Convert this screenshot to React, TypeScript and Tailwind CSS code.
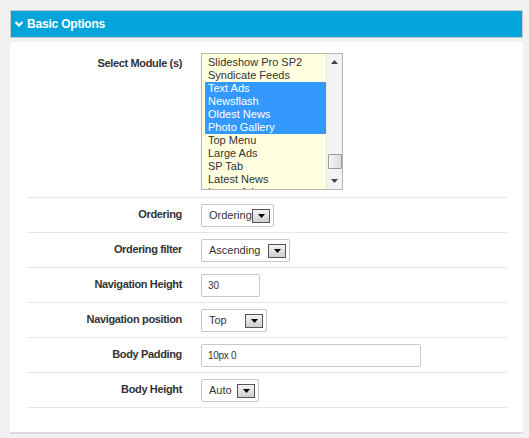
import React from "react";

const modules = [
  { name: "Slideshow Pro SP2", selected: false },
  { name: "Syndicate Feeds", selected: false },
  { name: "Text Ads", selected: true },
  { name: "Newsflash", selected: true },
  { name: "Oldest News", selected: true },
  { name: "Photo Gallery", selected: true },
  { name: "Top Menu", selected: false },
  { name: "Large Ads", selected: false },
  { name: "SP Tab", selected: false },
  { name: "Latest News", selected: false },
  { name: "Lower Ads", selected: false },
];

function DropArrow() {
  return (
    <span className="flex h-[14px] w-[18px] items-center justify-center border border-[#555] bg-gradient-to-b from-[#f4f4f4] to-[#cfcfcf]">
      <svg width="7" height="4" viewBox="0 0 7 4">
        <path d="M0 0h7L3.5 4z" fill="#000" />
      </svg>
    </span>
  );
}

function FakeSelect({ value, width }: { value: string; width: string }) {
  return (
    <div
      className={`flex h-[23px] items-center justify-between rounded-[2px] border border-[#c8c8c8] bg-white pl-[7px] pr-[3px] ${width}`}
    >
      <span className="text-[11px] text-[#333]">{value}</span>
      <DropArrow />
    </div>
  );
}

function Row({
  label,
  children,
  top,
}: {
  label: string;
  children: React.ReactNode;
  top?: boolean;
}) {
  return (
    <div
      className={`flex border-b border-[#e6e6e6] ${
        top ? "items-start pb-[7px] pt-[11px]" : "items-center pb-[5px] pt-[6px]"
      }`}
    >
      <div
        className={`w-[155px] shrink-0 text-right text-[11px] font-bold tracking-[-0.35px] text-[#333] ${
          top ? "pt-[2px]" : "pb-[3px]"
        }`}
      >
        {label}
      </div>
      <div className="ml-[19px]">{children}</div>
    </div>
  );
}

export default function App() {
  return (
    <div
      className="h-[438px] w-[529px] bg-[#f1f1f1] pl-[10px] pr-[6px] pt-[10px]"
      style={{ fontFamily: '"Liberation Sans", Arial, sans-serif' }}
    >
      <div className="flex h-[28px] items-center gap-[3px] border border-[#c9c9c9] bg-[#03a4da] pl-[3px] text-[12px] font-bold tracking-[-0.2px] text-white">
        <svg width="10" height="8" viewBox="0 0 10 8">
          <path
            d="M1.5 2l3.5 3.5L8.5 2"
            stroke="#fff"
            strokeWidth="2.2"
            fill="none"
          />
        </svg>
        Basic Options
      </div>

      <div className="mt-[4px] h-[392px] border-b-[2px] border-[#dcdcdc] bg-white pl-[17px] pr-[16px]">
        <Row label="Select Module (s)" top>
          <div className="flex h-[137px] w-[142px] border border-[#b5b5b5] bg-[#ffffdf]">
            <div className="flex-1 overflow-hidden pl-[3px] pt-[2px]">
              {modules.map((m) => (
                <div
                  key={m.name}
                  className={`h-[13px] pl-[3px] text-[11px] leading-[13px] ${
                    m.selected ? "bg-[#3399ff] text-white" : "text-[#333]"
                  }`}
                >
                  {m.name}
                </div>
              ))}
            </div>
            <div className="relative w-[16px] border-l border-[#e6e6e6] bg-[#f3f3f3]">
              <svg
                className="absolute left-[4px] top-[6px]"
                width="7"
                height="4"
                viewBox="0 0 7 4"
              >
                <path d="M0 4h7L3.5 0z" fill="#444" />
              </svg>
              <div className="absolute left-[1px] top-[100px] h-[15px] w-[14px] rounded-[1px] border border-[#9a9a9a] bg-gradient-to-r from-[#f6f6f6] to-[#dcdcdc]" />
              <svg
                className="absolute bottom-[6px] left-[4px]"
                width="7"
                height="4"
                viewBox="0 0 7 4"
              >
                <path d="M0 0h7L3.5 4z" fill="#444" />
              </svg>
            </div>
          </div>
        </Row>
        <Row label="Ordering">
          <FakeSelect value="Ordering" width="w-[73px]" />
        </Row>
        <Row label="Ordering filter">
          <FakeSelect value="Ascending" width="w-[89px]" />
        </Row>
        <Row label="Navigation Height">
          <div className="flex h-[23px] w-[59px] items-center rounded-[2px] border border-[#c8c8c8] bg-white pl-[6px] text-[10px] text-[#333]">
            30
          </div>
        </Row>
        <Row label="Navigation position">
          <FakeSelect value="Top" width="w-[66px]" />
        </Row>
        <Row label="Body Padding">
          <div className="flex h-[23px] w-[220px] items-center rounded-[2px] border border-[#c8c8c8] bg-white pl-[6px] text-[10px] tracking-[-0.3px] text-[#333]">
            10px 0
          </div>
        </Row>
        <Row label="Body Height">
          <FakeSelect value="Auto" width="w-[58px]" />
        </Row>
      </div>
    </div>
  );
}
